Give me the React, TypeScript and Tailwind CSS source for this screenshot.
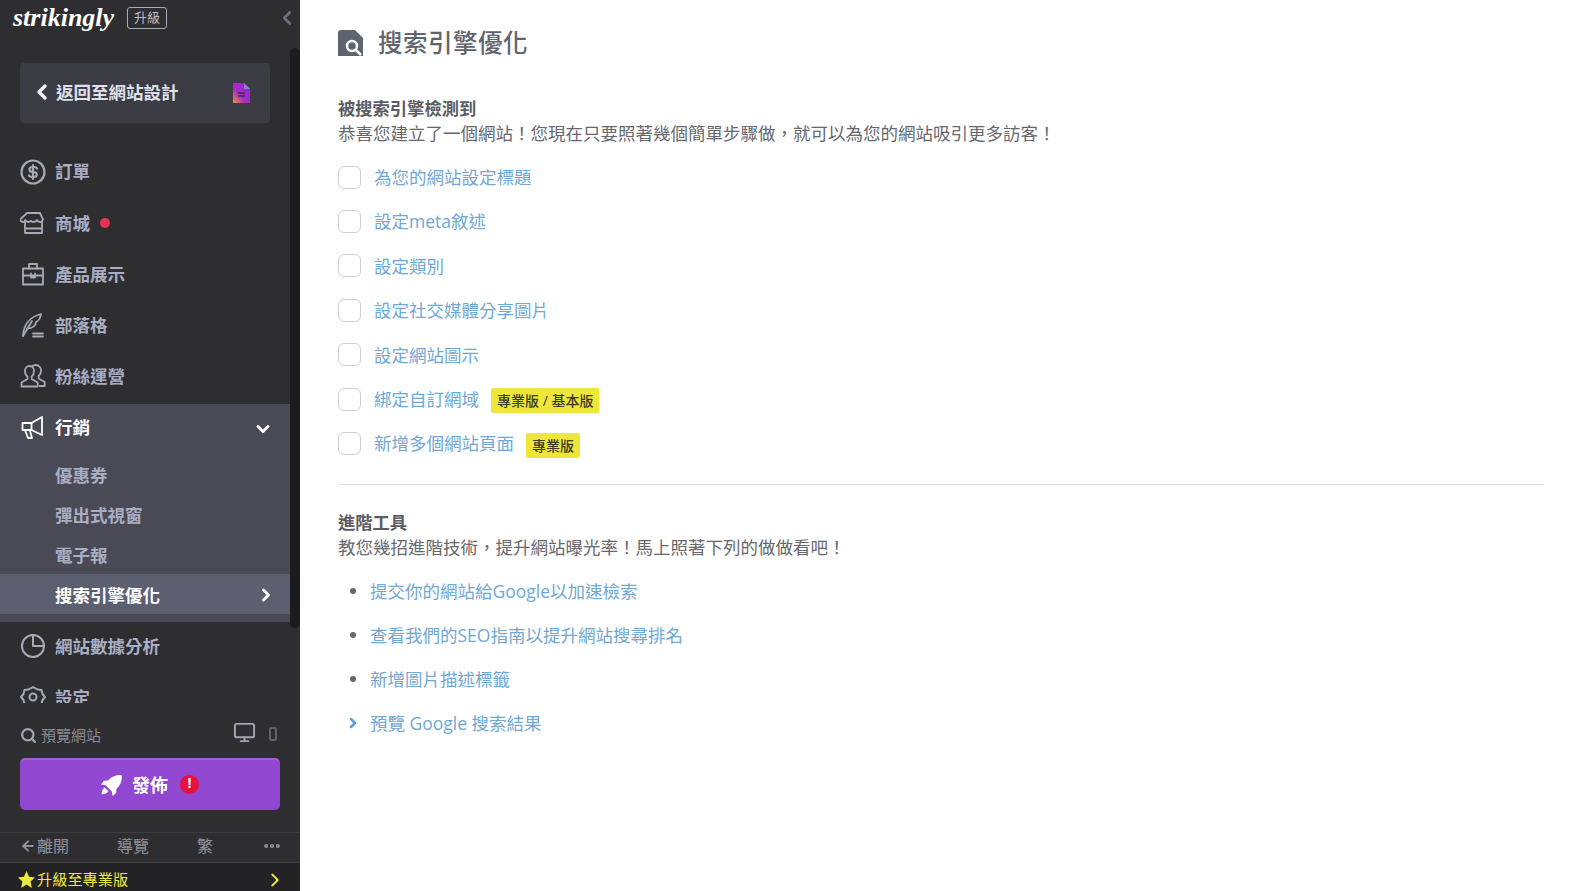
import { ChevronDown, ChevronLeft, ChevronRight, ArrowLeft, Search, Monitor, Ellipsis } from "lucide-react";
import type { ReactNode } from "react";

const stroke = { fill: "none", stroke: "currentColor", strokeWidth: 1.8, strokeLinecap: "round", strokeLinejoin: "round" } as const;

function Icon({ children }: { children: ReactNode }) {
  return (
    <svg viewBox="0 0 26 26" className="h-[26px] w-[26px] shrink-0" {...stroke}>
      {children}
    </svg>
  );
}

const navItems: { label: string; dot?: boolean; icon: ReactNode }[] = [
  {
    label: "訂單",
    icon: (
      <Icon>
        <circle cx="13" cy="13" r="11.500" strokeWidth="2.200" />
        <path strokeWidth="2.200" d="M17 9.500c-.5-1-1.600-1.500-2.600-1.500h-2.200C10.700 8 9.500 9 9.500 10.500S10.700 13 12.200 13h1.800c1.500 0 2.700 1 2.700 2.500S15.500 18 14 18h-2.200c-1.200 0-2.300-.5-2.800-1.500M13 6v14" />
      </Icon>
    ),
  },
  {
    label: "商城",
    dot: true,
    icon: (
      <Icon>
        <path d="M7 3h13l3 6.500c-.5 1.500-1.500 2.500-3 2.500-1.400 0-2.500-.8-3-2-.7 1.200-2.200 2-3.700 2-1.200 0-2-.6-2.300-1.200-.5.700-1.500 1.200-2.700 1.200-1.400 0-2.200-.8-3-2-.4 1.200-1.300 2-2.300 2-1.400 0-2.500-1-3-2.500z" />
        <path d="M5 12v11h17V12M5 18.500h17" />
      </Icon>
    ),
  },
  {
    label: "產品展示",
    icon: (
      <Icon>
        <rect x="3" y="7.500" width="20" height="16" />
        <path d="M9 7.500V3h8v4.500M3 14.500h20M11 12.500v4h4v-4" />
      </Icon>
    ),
  },
  {
    label: "部落格",
    icon: (
      <Icon>
        <path d="M3 24C3.500 14 9 5 21 2c-.5 4-2 6.500-5 8 0 3-3 6.500-9 6.500" />
        <path d="M12 9 3 24M13 21.500h10M13 24.500h10" />
      </Icon>
    ),
  },
  {
    label: "粉絲運營",
    icon: (
      <Icon>
        <path d="M5 8c0-3 2-5 4.500-5S14 5 14 8c0 2.500-1 4.500-2.300 5.500v2.500l6 3.500v4H1.500v-4l6-3.500v-2.500C6 12.500 5 10.500 5 8z" />
        <path d="M12 3.500c1-1 2-1.500 3.500-1.500C19 2 21 4.500 21 7.500c0 2.500-1 4.500-2.300 5.500v2.500l6 3.500v4h-5" />
      </Icon>
    ),
  },
];

function LogoMark() {
  return (
    <svg viewBox="0 0 18 20" className="h-5 w-[18px]">
      <defs>
        <linearGradient id="doc" x1="1" y1="0" x2="0" y2="1">
          <stop offset="0" stopColor="#a21fe0" />
          <stop offset="0.6" stopColor="#a52cc4" />
          <stop offset="1" stopColor="#f5923a" />
        </linearGradient>
      </defs>
      <path d="M0 0h11l6 6v14H0z" fill="url(#doc)" />
      <path d="M11 0l6 6h-6z" fill="#8a84c8" />
      <path d="M5 10h7M5 13h7" stroke="#3d2e55" strokeWidth="1.500" />
    </svg>
  );
}

function RocketIcon() {
  return (
    <svg viewBox="0 0 20 20" className="h-[21px] w-[21px]" fill="currentColor">
      <path d="M19.800.2C14.500-.3 10 1.500 6.800 5.300L2.800 5.500 0 9l4.300.8 6 6 .7 4.200 3.500-2.800.2-4C18.500 10 20.300 5.500 19.800.2z" />
      <path d="M3.500 12c-1.800 1-2.800 3-3 6.500 3.500-.2 5.500-1.200 6.500-3z" />
    </svg>
  );
}

function SeoIcon() {
  return (
    <svg viewBox="0 0 25 27" className="h-[27px] w-[25px]">
      <path d="M0 4a3 3 0 0 1 3-3h14l8 8v19H0z" fill="#5f6570" />
      <circle cx="14" cy="17" r="5" fill="none" stroke="#fff" strokeWidth="2.500" />
      <path d="M18 21l5 5" stroke="#fff" strokeWidth="2.500" />
    </svg>
  );
}

function Sidebar() {
  return (
    <aside className="relative flex h-full w-[300px] shrink-0 flex-col bg-[#2e2d30] text-[17.500px]">
      <div className="flex h-12 shrink-0 items-start pl-[13px] pr-[2px] pt-[3px]">
        <span className="w-[114px] font-['Liberation_Serif',serif] text-[26px] font-bold italic leading-[30px] text-white">strikingly</span>
        <span className="mt-[4px] flex h-[22px] w-10 items-center justify-center rounded-[3px] border border-[#a8abb8] text-[13px] text-[#b9bccb]">升級</span>
        <ChevronLeft className="ml-auto mt-[4px] text-[#6d7080]" size={22} strokeWidth={3} />
      </div>

      <div className="min-h-0 flex-1 overflow-hidden">
        <a className="ml-5 mt-[15px] flex h-[60px] w-[250px] items-center rounded bg-[#3b3c44] pb-[2px] pl-[10px] pr-[19px] font-bold text-[#dfe1ea]">
          <ChevronLeft size={24} strokeWidth={3.500} className="text-[#eceef5]" />
          <span className="ml-[2px]">返回至網站設計</span>
          <span className="ml-auto mt-[2px]">
            <LogoMark />
          </span>
        </a>

        <nav className="mt-[23px] w-[290px] font-bold text-[#a9adc3]">
          {navItems.map((item) => (
            <a key={item.label} className="flex h-[51.200px] items-center gap-[9px] pl-5">
              <span className="text-[#a7a9b4]">{item.icon}</span>
              {item.label}
              {item.dot && <span className="ml-[1px] h-2.5 w-2.5 rounded-full bg-[#e5344f]" />}
            </a>
          ))}

          <div className="mt-[2px] bg-[#494a55] pb-2">
            <a className="flex h-[50px] items-center gap-[9px] pb-1 pl-5 pr-[17px] text-white">
              <Icon>
                <path d="M2.500 9h9L22 3v18l-10.500-5h-9z" />
                <path d="M5 16l3 8h4l-2-7" />
                <path d="M11.500 9v7" />
              </Icon>
              行銷
              <ChevronDown className="ml-auto mt-1" size={20} strokeWidth={3.500} />
            </a>
            <a className="flex h-10 items-center pl-[55px] pt-[2px]">優惠券</a>
            <a className="flex h-10 items-center pl-[55px] pt-[2px]">彈出式視窗</a>
            <a className="flex h-10 items-center pl-[55px] pt-[2px]">電子報</a>
            <a className="flex h-10 items-center bg-[#5c5f70] pl-[55px] pr-[14px] pt-[2px] text-white">
              搜索引擎優化
              <ChevronRight className="ml-auto" size={20} strokeWidth={3.500} />
            </a>
          </div>

          <a className="-mt-px flex h-[51px] items-center gap-[9px] pl-5">
            <span className="text-[#a7a9b4]">
              <Icon>
                <circle cx="13" cy="13" r="11" strokeWidth="2" />
                <path strokeWidth="2" d="M13 2v11h11" />
              </Icon>
            </span>
            網站數據分析
          </a>
          <a className="flex h-[51px] items-center gap-[9px] pl-5">
            <span className="text-[#a7a9b4]">
              <Icon>
                <path strokeWidth="2" d="M8.500 5.500 13 3l4.500 2.500 4 .500 1 4L25 13l-2.500 3-1 4-4 .500L13 23l-4.500-2.500-4-.500-1-4L1 13l2.500-3 1-4z" />
                <circle cx="13" cy="13" r="3.500" strokeWidth="2" />
              </Icon>
            </span>
            設定
          </a>
        </nav>
      </div>

      <div className="shrink-0 bg-[#2e2d30]">
        <div className="flex h-[55px] items-center pl-5 pr-[23px] pt-[10px] text-[15px] text-[#8a8c96]">
          <Search size={17} strokeWidth={3.200} className="text-[#a2a5b0]" />
          <span className="ml-[4px]">預覽網站</span>
          <Monitor size={23} strokeWidth={2} className="ml-auto -mt-[6px] text-[#a2a5b0]" />
          <span className="ml-[13px] -mt-1 h-[14px] w-[8px] rounded-[2px] border-2 border-[#5f6068]" />
        </div>
        <div className="px-5">
          <button className="flex h-[52px] w-full items-center justify-center rounded-[5px] border-t-2 border-[#a25ed8] bg-[#9147cf] text-[18px] font-bold text-white">
            <RocketIcon />
            <span className="ml-[10px]">發佈</span>
            <span className="mb-[2px] ml-3 flex h-[19px] w-[19px] items-center justify-center rounded-full bg-[#e8103e] pb-[3px] text-[14px] leading-none">!</span>
          </button>
        </div>
        <div className="mt-[22px] flex h-[31px] items-center border-y border-[#3e3e42] pb-[3px] pl-5 pr-[18px] text-[16px] text-[#8f919c]">
          <ArrowLeft size={16} strokeWidth={3} />
          <span className="ml-[1px]">離開</span>
          <span className="ml-[48px]">導覽</span>
          <span className="ml-[48px]">繁</span>
          <Ellipsis size={20} strokeWidth={3} className="ml-auto" />
        </div>
        <div className="flex h-[28px] items-center bg-[#232225] pl-[18px] pr-[14px] pt-[5px] text-[15.200px] text-[#ecea3c]">
          <svg viewBox="0 0 20 20" className="h-[17px] w-[17px]" fill="currentColor">
            <path d="M10 0l3 6.800 7 .8-5.200 4.800L16.200 20 10 16l-6.200 4 1.400-7.600L0 7.600l7-.8z" />
          </svg>
          <span className="ml-[2px]">升級至專業版</span>
          <ChevronRight size={22} strokeWidth={2} className="ml-auto" />
        </div>
      </div>

      <div className="absolute right-0 top-12 h-[580px] w-2.5 rounded-md bg-[#1c1c1f]" />
    </aside>
  );
}

function CheckRow({ label, badge }: { label: string; badge?: string }) {
  return (
    <li className="flex h-[44.400px] items-center">
      <span className="h-[23px] w-[23px] shrink-0 rounded-[6px] border border-[#cfcfcf] bg-white" />
      <a className="ml-[13px] text-[#6fa8d6]">{label}</a>
      {badge && <span className="ml-3 mt-[3px] flex h-[25px] items-center rounded-[2px] bg-[#efe63a] px-[6px] text-[14px] font-medium text-[#3a3a1e]">{badge}</span>}
    </li>
  );
}

export default function App() {
  return (
    <div className="flex h-screen w-full overflow-hidden bg-white font-['Open_Sans','Noto_Sans_CJK_TC',sans-serif]">
      <Sidebar />
      <main className="min-w-0 flex-1 pl-[38px] pr-[37px] text-[17.500px] text-[#67686e]">
        <div className="flex h-[86px] items-center pb-[1px]">
          <SeoIcon />
          <h1 className="ml-[15px] mt-[1px] text-[24.500px] font-medium tracking-[0.500px] text-[#61646c]">搜索引擎優化</h1>
        </div>

        <h2 className="mt-[10px] text-[17.300px] font-bold leading-[25px] text-[#5c5d63]">被搜索引擎檢測到</h2>
        <p className="leading-[25px]">恭喜您建立了一個網站！您現在只要照著幾個簡單步驟做，就可以為您的網站吸引更多訪客！</p>

        <ul className="mt-[9px]">
          <CheckRow label="為您的網站設定標題" />
          <CheckRow label="設定meta敘述" />
          <CheckRow label="設定類別" />
          <CheckRow label="設定社交媒體分享圖片" />
          <CheckRow label="設定網站圖示" />
          <CheckRow label="綁定自訂網域" badge="專業版 / 基本版" />
          <CheckRow label="新增多個網站頁面" badge="專業版" />
        </ul>

        <hr className="mt-[18px] border-[#e2e2e2]" />

        <h2 className="mt-[25px] text-[17.300px] font-bold leading-[25px] text-[#5c5d63]">進階工具</h2>
        <p className="leading-[25px]">教您幾招進階技術，提升網站曝光率！馬上照著下列的做做看吧！</p>

        <ul className="mt-[9px] text-[#6fa8d6]">
          {["提交你的網站給Google以加速檢索", "查看我們的SEO指南以提升網站搜尋排名", "新增圖片描述標籤"].map((t) => (
            <li key={t} className="flex h-[44px] items-center">
              <span className="ml-3 h-[6px] w-[6px] rounded-full bg-[#67686e]" />
              <a className="ml-[14px]">{t}</a>
            </li>
          ))}
          <li className="flex h-[44px] items-center">
            <ChevronRight size={16} strokeWidth={3.800} className="ml-[7px] text-[#5a9fd8]" />
            <a className="ml-[9px]">預覽 Google 搜索結果</a>
          </li>
        </ul>
      </main>
    </div>
  );
}
